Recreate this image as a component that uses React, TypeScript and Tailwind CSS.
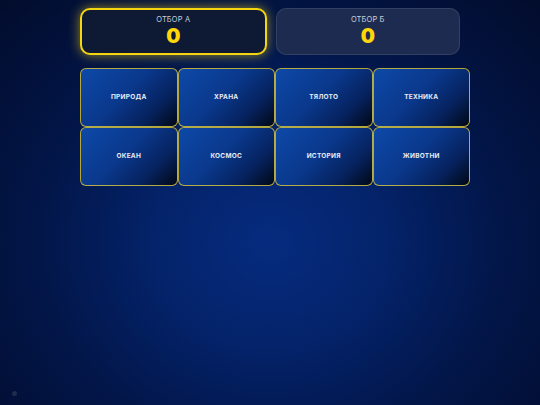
import React from "react";

const categories = [
  "ПРИРОДА",
  "ХРАНА",
  "ТЯЛОТО",
  "ТЕХНИКА",
  "ОКЕАН",
  "КОСМОС",
  "ИСТОРИЯ",
  "ЖИВОТНИ",
];

function ScoreCard({ label, score, active }: { label: string; score: number; active?: boolean }) {
  return (
    <div
      className={
        active
          ? "flex-1 h-[47px] rounded-[10px] border-2 border-[#f5d50f] bg-[#0e1a33] shadow-[0_0_12px_rgba(250,214,21,0.6)] flex flex-col items-center pt-[5px]"
          : "flex-1 h-[47px] rounded-[10px] border border-white/10 bg-[#1d2b50] flex flex-col items-center pt-[6px]"
      }
    >
      <div className="text-[7.5px] leading-[10px] text-[#c9cfdb] tracking-[0.02em]">{label}</div>
      <div className="text-[20px] leading-[22px] font-black text-[#ffd60a]">{score}</div>
    </div>
  );
}

export default function App() {
  return (
    <div
      className="w-[540px] h-[405px] overflow-hidden relative bg-[radial-gradient(ellipse_at_50%_60%,#062b7f_0%,#04236a_30%,#021649_60%,#020c2c_100%)]"
      style={{ fontFamily: "Inter, 'Noto Sans', sans-serif" }}
    >
      <div className="w-[380px] mx-auto pt-[8px]">
        <div className="flex gap-[9px]">
          <ScoreCard label="ОТБОР А" score={0} active />
          <ScoreCard label="ОТБОР Б" score={0} />
        </div>

        {/* category board */}
        <div className="w-[390px] mt-[13px] grid grid-cols-4">
          {categories.map((c) => (
            <div
              key={c}
              className="h-[59px] rounded-[6px] border border-[#d4c03a]/85 bg-[linear-gradient(135deg,#0d49a8_0%,#0a388c_45%,#06225e_75%,#010816_100%)] flex items-center justify-center pt-[1px]"
            >
              <span className="text-[6.5px] font-bold text-[#e8ecf5] tracking-[0.04em]">{c}</span>
            </div>
          ))}
        </div>
      </div>

      <div className="absolute left-[12px] top-[391px] w-[5px] h-[5px] rounded-full bg-[#1f2c4c]" />
    </div>
  );
}
